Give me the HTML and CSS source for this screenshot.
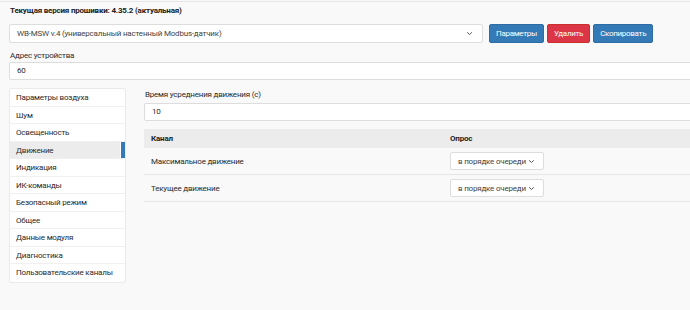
FILE: index.html
```html
<!DOCTYPE html>
<html lang="ru">
<head>
    <meta charset="UTF-8">
    <title>Устройство</title>
    <link rel="stylesheet" href="styles.css">
</head>
<body>
    <div class="page">
        <div class="fw-version">Текущая версия прошивки: 4.35.2 (актуальная)</div>

        <div class="device-row">
            <div class="select device-select">
                <span>WB-MSW v.4 (универсальный настенный Modbus-датчик)</span>
                <svg class="chevron" width="7" height="5" viewBox="0 0 7 5"><path d="M1.2 1.3 3.5 3.5 5.8 1.3" fill="none" stroke="#555" stroke-width="1"/></svg>
            </div>
            <button class="btn btn-primary">Параметры</button>
            <button class="btn btn-danger">Удалить</button>
            <button class="btn btn-primary">Скопировать</button>
        </div>

        <div class="form-group">
            <label>Адрес устройства</label>
            <div class="input">60</div>
        </div>

        <div class="layout">
            <ul class="nav">
                <li>Параметры воздуха</li>
                <li>Шум</li>
                <li>Освещенность</li>
                <li class="active">Движение</li>
                <li>Индикация</li>
                <li>ИК-команды</li>
                <li>Безопасный режим</li>
                <li>Общее</li>
                <li>Данные модуля</li>
                <li>Диагностика</li>
                <li>Пользовательские каналы</li>
            </ul>

            <div class="content">
                <div class="form-group">
                    <label>Время усреднения движения (с)</label>
                    <div class="input">10</div>
                </div>

                <table class="channels">
                    <thead>
                        <tr><th class="col-name">Канал</th><th>Опрос</th></tr>
                    </thead>
                    <tbody>
                        <tr>
                            <td>Максимальное движение</td>
                            <td>
                                <div class="select poll-select">
                                    <span>в порядке очереди</span>
                                    <svg class="chevron" width="7" height="5" viewBox="0 0 7 5"><path d="M1.2 1.3 3.5 3.5 5.8 1.3" fill="none" stroke="#555" stroke-width="1"/></svg>
                                </div>
                            </td>
                        </tr>
                        <tr>
                            <td>Текущее движение</td>
                            <td>
                                <div class="select poll-select">
                                    <span>в порядке очереди</span>
                                    <svg class="chevron" width="7" height="5" viewBox="0 0 7 5"><path d="M1.2 1.3 3.5 3.5 5.8 1.3" fill="none" stroke="#555" stroke-width="1"/></svg>
                                </div>
                            </td>
                        </tr>
                    </tbody>
                </table>
            </div>
        </div>
    </div>
</body>
</html>
```

FILE: styles.css
```css
html, body {
    margin: 0;
    padding: 0;
    overflow: hidden;
}
body {
    font-family: Roboto, "Noto Sans", Arial, sans-serif;
    font-size: 8px;
    letter-spacing: -0.2px;
    color: #2a2a2a;
    background-color: #f9f9f9;
    width: 690px;
    height: 310px;
}
.page {
    width: 740px;
    margin-top: 1px;
    border-top: 1px solid #e6e6e6;
    padding: 0 9px;
}
.fw-version {
    font-weight: 700;
    color: #222;
    line-height: 12px;
    padding: 3px 1px 0;
}
.device-row {
    display: flex;
    gap: 3px;
    margin-top: 7px;
    white-space: nowrap;
}
.select {
    display: flex;
    align-items: center;
    justify-content: space-between;
    background: white;
    border: 1px solid #ddd;
    border-radius: 2px;
    box-sizing: border-box;
    color: #444;
    white-space: nowrap;
}
.device-select {
    width: 474px;
    height: 19px;
    padding: 0 9px 0 7px;
    margin-right: 3px;
}
.btn {
    font-family: inherit;
    font-size: 8px;
    letter-spacing: -0.3px;
    color: white;
    height: 19px;
    border: 1px solid;
    border-radius: 2px;
    padding: 0 6px;
    cursor: pointer;
}
.btn-primary {
    background-color: #337ab7;
    border-color: #2e6da4;
}
.btn-danger {
    background-color: #dc3545;
    border-color: #c9302c;
}
.form-group label {
    display: block;
    line-height: 12px;
    padding-left: 1px;
}
.page > .form-group {
    margin-top: 7px;
}
.input {
    background: white;
    border: 1px solid #ddd;
    border-radius: 2px;
    height: 18px;
    line-height: 16px;
    box-sizing: border-box;
    padding: 0 7px;
}
.layout {
    display: flex;
    gap: 18px;
    margin-top: 8px;
}
.nav {
    list-style: none;
    margin: 0;
    padding: 0;
    width: 117px;
    flex: none;
    box-sizing: border-box;
    background: white;
    border: 1px solid #eaeaea;
    border-radius: 2px;
}
.nav li {
    height: 17.5px;
    line-height: 17px;
    padding-left: 6px;
    border-bottom: 1px solid #f0f0f0;
    box-sizing: border-box;
}
.nav li:last-child {
    border-bottom: none;
}
.nav li.active {
    background-color: #ececec;
    box-shadow: inset -4px 0 0 #337ab7, inset -5px 0 0 white;
}
.content {
    flex: 1;
}
.content .form-group {
    padding-top: 1px;
}
.content .input {
    margin-top: 2px;
}
.channels {
    width: 100%;
    border-collapse: collapse;
    margin-top: 8px;
}
.channels th {
    text-align: left;
    font-weight: 700;
    color: #222;
    background-color: #ececec;
    height: 19px;
    padding: 0 7px;
}
.channels th.col-name {
    width: 285px;
}
.channels td {
    height: 26px;
    padding: 0 7px;
    border-bottom: 1px solid #e6e6e6;
}
.poll-select {
    width: 94px;
    height: 18px;
    padding: 0 8px 0 7px;
}
.chevron {
    flex: none;
}
```
